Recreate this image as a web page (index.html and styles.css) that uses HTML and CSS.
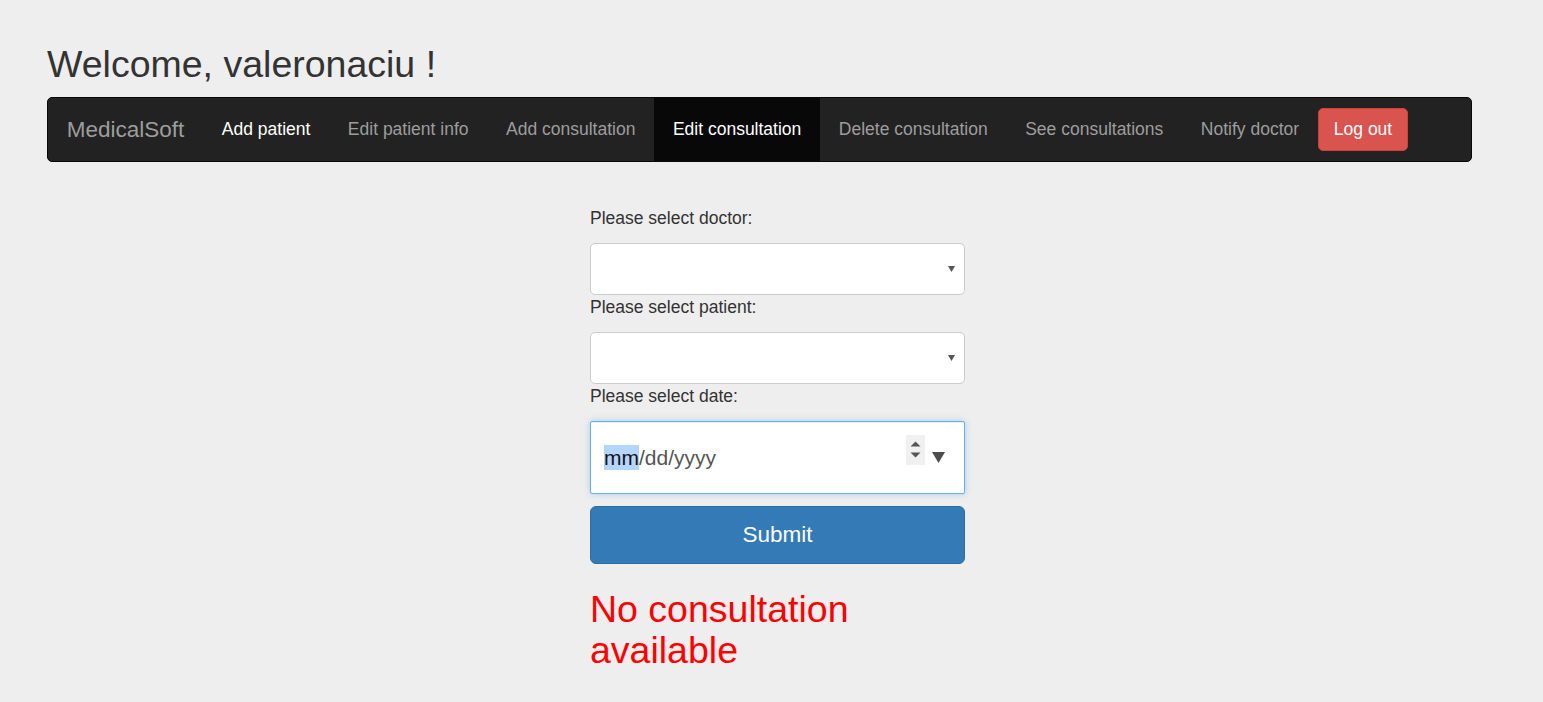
FILE: index.html
```html
<!DOCTYPE html>
<html>
<head>
<meta charset="utf-8">
<title>MedicalSoft</title>
<link rel="stylesheet" href="styles.css">
</head>
<body>
<div class="page">
  <h2 class="welcome">Welcome, valeronaciu !</h2>
  <nav class="navbar">
    <a class="brand">MedicalSoft</a>
    <ul class="nav">
      <li><a class="nav-link hover">Add patient</a></li>
      <li><a class="nav-link">Edit patient info</a></li>
      <li><a class="nav-link">Add consultation</a></li>
      <li class="active"><a class="nav-link">Edit consultation</a></li>
      <li><a class="nav-link">Delete consultation</a></li>
      <li><a class="nav-link">See consultations</a></li>
      <li><a class="nav-link">Notify doctor</a></li>
      <li><button class="btn-logout">Log out</button></li>
    </ul>
  </nav>

  <form class="form">
    <label class="label">Please select doctor:</label>
    <div class="select">
      <svg class="select-arrow" width="7" height="6" viewBox="0 0 7 6"><path d="M0 0H7L3.5 6Z" fill="#555"/></svg>
    </div>
    <label class="label">Please select patient:</label>
    <div class="select">
      <svg class="select-arrow" width="7" height="6" viewBox="0 0 7 6"><path d="M0 0H7L3.5 6Z" fill="#555"/></svg>
    </div>
    <label class="label">Please select date:</label>
    <div class="date-input">
      <span class="date-text"><span class="date-sel">mm</span>/dd/yyyy</span>
      <span class="spinner">
        <svg width="19" height="30" viewBox="0 0 19 30"><path d="M4.5 11.5L9.5 6.5L14.5 11.5Z" fill="#555"/><path d="M4.5 17.5L14.5 17.5L9.5 22.5Z" fill="#555"/></svg>
      </span>
      <svg class="date-drop" width="13" height="11" viewBox="0 0 13 11"><path d="M0 0H13L6.5 11Z" fill="#4d4d4d"/></svg>
    </div>
    <button type="button" class="btn-submit">Submit</button>
    <p class="error">No consultation available</p>
  </form>
</div>
</body>
</html>
```

FILE: styles.css
```css
html, body {
  margin: 0;
  padding: 0;
  background: #eeeeee;
  font-family: "Liberation Sans", Arial, sans-serif;
  color: #333333;
}

.page {
  padding: 0 0 0 47px;
}

.welcome {
  margin: 44px 0 0 0;
  font-size: 37.5px;
  line-height: 41px;
  font-weight: 400;
  color: #333333;
}

.navbar {
  box-sizing: border-box;
  margin-top: 12px;
  width: 1425px;
  height: 64.5px;
  background: #222222;
  border: 1px solid #080808;
  border-radius: 5px;
  display: flex;
  align-items: flex-start;
}

.brand {
  padding: 18.75px 18.75px;
  font-size: 22.5px;
  line-height: 25px;
  color: #9d9d9d;
}

.nav {
  list-style: none;
  margin: 0;
  padding: 0;
  display: flex;
  align-items: flex-start;
}

.nav li {
  display: block;
}

.nav-link {
  display: block;
  padding: 18.75px 18.75px 18.75px;
  font-size: 17.5px;
  line-height: 25px;
  color: #9d9d9d;
}

.nav-link.hover {
  color: #ffffff;
}

.nav .active .nav-link {
  background: #080808;
  color: #ffffff;
}

.btn-logout {
  margin-top: 10px;
  box-sizing: border-box;
  padding: 8px 15px 7.5px;
  font-family: "Liberation Sans", Arial, sans-serif;
  font-size: 17.5px;
  line-height: 25px;
  color: #ffffff;
  background: #d9534f;
  border: 1px solid #d43f3a;
  border-radius: 5px;
}

.form {
  margin: 44px 0 0 543px;
  width: 375px;
}

.label {
  display: block;
  font-size: 17.5px;
  line-height: 25px;
  color: #333333;
  margin-bottom: 12px;
}

.select {
  box-sizing: border-box;
  position: relative;
  height: 52px;
  background: #ffffff;
  border: 1px solid #cccccc;
  border-radius: 5px;
}

.select-arrow {
  position: absolute;
  right: 9px;
  top: 22px;
}

.date-input {
  box-sizing: border-box;
  height: 73px;
  background: #ffffff;
  border: 1px solid #66afe9;
  border-radius: 2px;
  box-shadow: inset 0 1px 1px rgba(0,0,0,.075), 0 0 6px rgba(102,175,233,.5);
  display: flex;
  align-items: center;
  padding: 0 19px 0 13px;
}

.date-text {
  font-size: 21px;
  line-height: 25px;
  color: #555555;
}

.date-sel {
  background: #b4d5fe;
  color: #111111;
  display: inline-block;
}

.spinner {
  margin-left: auto;
  align-self: flex-start;
  margin-top: 13px;
  width: 19px;
  height: 30px;
  background: #f0f0f0;
  display: block;
}

.spinner svg {
  display: block;
}

.date-drop {
  margin-left: 7px;
  display: block;
}

.btn-submit {
  display: block;
  margin-top: 12px;
  box-sizing: border-box;
  width: 375px;
  height: 58px;
  background: #337ab7;
  border: 1.25px solid #2e6da4;
  border-radius: 6px;
  color: #ffffff;
  font-family: "Liberation Sans", Arial, sans-serif;
  font-size: 22.5px;
  line-height: 30px;
  padding: 0;
}

.error {
  margin: 25px 0 0 0;
  font-size: 37.5px;
  line-height: 41px;
  color: #ff0000;
}
```
